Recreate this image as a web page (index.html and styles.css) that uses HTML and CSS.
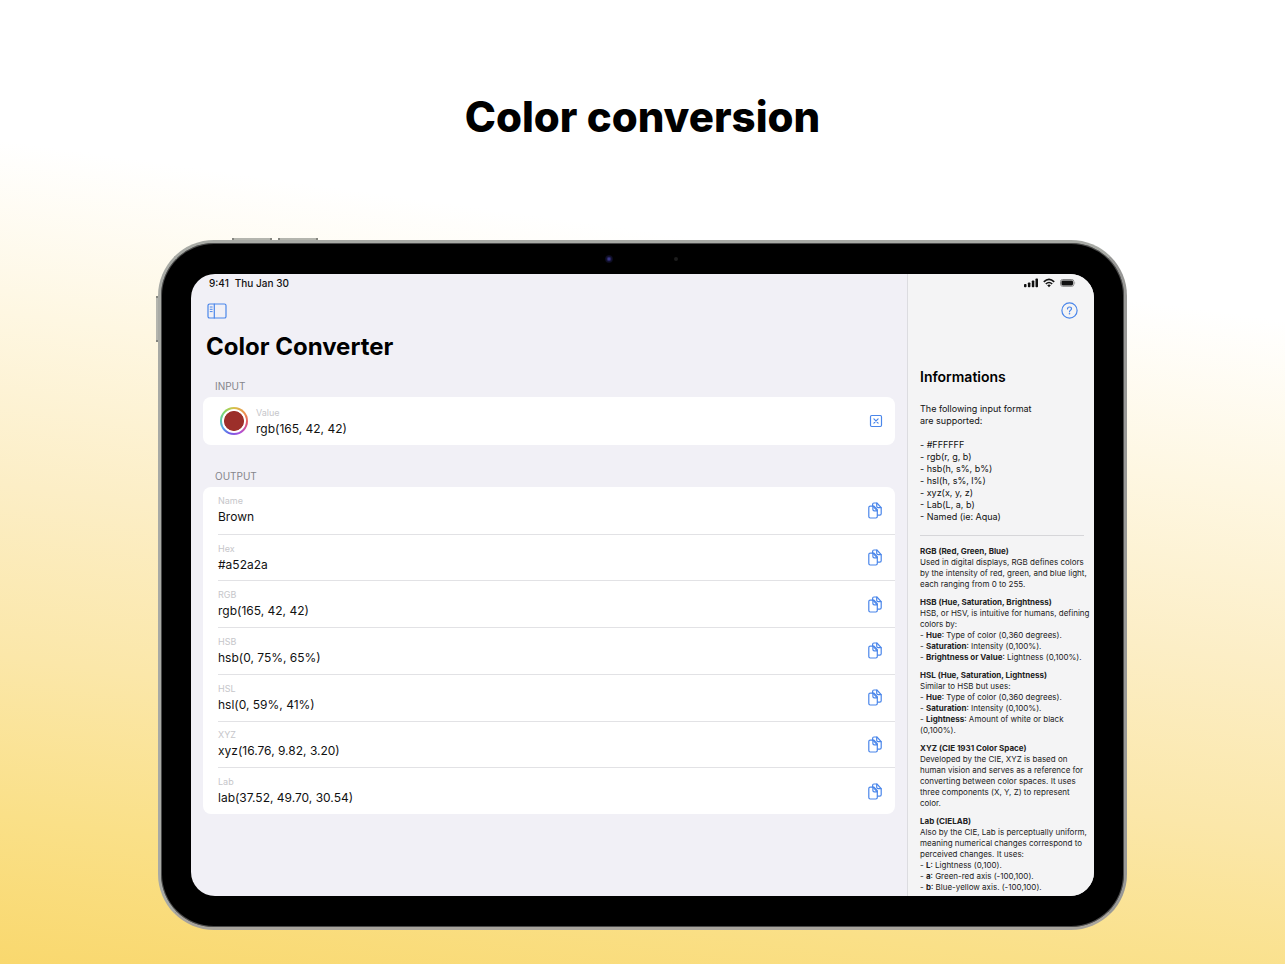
FILE: index.html
```html
<!DOCTYPE html>
<html lang="en">
<head>
<meta charset="utf-8">
<title>Color conversion</title>
<link rel="stylesheet" href="styles.css">
</head>
<body>
<svg class="defs" aria-hidden="true">
  <symbol id="copy" viewBox="0 0 14 17">
    <path d="M4.6 3.8V2.4Q4.6 1 6 1H8.9L13.2 5.6V11.8Q13.2 13.2 11.8 13.2H9.6"/>
    <path d="M8.7 1.2V4.2Q8.7 5.6 10.1 5.6H13"/>
    <path d="M2.2 4.1H4.9L9.3 8.9V14.6Q9.3 16 7.9 16H2.2Q.8 16 .8 14.6V5.5Q.8 4.1 2.2 4.1Z"/>
    <path d="M4.9 4.3V7.5Q4.9 8.9 6.3 8.9H9.1M5 4.1H6L9.3 7.6V9"/>
  </symbol>
</svg>
<main class="page">
  <h1 class="headline">Color conversion</h1>
  <div class="device">
    <span class="key key-a"></span><span class="key key-b"></span><span class="key key-c"></span>
    <span class="camera"></span><span class="sensor"></span>
    <div class="screen">
      <section class="content">
        <div class="status"><span>9:41</span><span>Thu Jan 30</span></div>
        <div class="toolbar">
          <button class="icon-button" type="button" aria-label="Toggle sidebar">
            <svg width="20" height="16" viewBox="0 0 20 16"><rect x="1" y="1" width="18" height="14" rx="1.6"/><path d="M7.3 1V15"/><path class="thin" d="M3.2 4H5.2M3.2 6.3H5.2M3.2 8.6H5.2"/></svg>
          </button>
        </div>
        <h2 class="title">Color Converter</h2>
        <h3 class="section-label">INPUT</h3>
        <div class="card input-card">
          <span class="ring"><input class="swatch" type="color" value="#9c2f2a" aria-label="Pick a color"></span>
          <div class="field">
            <label class="caption" for="value">Value</label>
            <input class="value" id="value" type="text" value="rgb(165, 42, 42)">
          </div>
          <button class="icon-button" type="button" aria-label="Clear">
            <svg width="14" height="14" viewBox="0 0 14 14"><rect x="1.5" y="1.5" width="11" height="11" rx="1.2"/><path d="M4.9 4.9L9.1 9.1M9.1 4.9L4.9 9.1"/></svg>
          </button>
        </div>
        <h3 class="section-label">OUTPUT</h3>
        <dl class="card output-card">
          <div class="row"><dt class="caption">Name</dt><dd class="value">Brown</dd><dd class="action"><button class="icon-button" type="button" aria-label="Copy name"><svg width="14" height="17"><use href="#copy"/></svg></button></dd></div>
          <div class="row"><dt class="caption">Hex</dt><dd class="value">#a52a2a</dd><dd class="action"><button class="icon-button" type="button" aria-label="Copy hex"><svg width="14" height="17"><use href="#copy"/></svg></button></dd></div>
          <div class="row"><dt class="caption">RGB</dt><dd class="value">rgb(165, 42, 42)</dd><dd class="action"><button class="icon-button" type="button" aria-label="Copy RGB"><svg width="14" height="17"><use href="#copy"/></svg></button></dd></div>
          <div class="row"><dt class="caption">HSB</dt><dd class="value">hsb(0, 75%, 65%)</dd><dd class="action"><button class="icon-button" type="button" aria-label="Copy HSB"><svg width="14" height="17"><use href="#copy"/></svg></button></dd></div>
          <div class="row"><dt class="caption">HSL</dt><dd class="value">hsl(0, 59%, 41%)</dd><dd class="action"><button class="icon-button" type="button" aria-label="Copy HSL"><svg width="14" height="17"><use href="#copy"/></svg></button></dd></div>
          <div class="row"><dt class="caption">XYZ</dt><dd class="value">xyz(16.76, 9.82, 3.20)</dd><dd class="action"><button class="icon-button" type="button" aria-label="Copy XYZ"><svg width="14" height="17"><use href="#copy"/></svg></button></dd></div>
          <div class="row"><dt class="caption">Lab</dt><dd class="value">lab(37.52, 49.70, 30.54)</dd><dd class="action"><button class="icon-button" type="button" aria-label="Copy Lab"><svg width="14" height="17"><use href="#copy"/></svg></button></dd></div>
        </dl>
      </section>
      <aside class="info">
        <div class="status status-end">
          <svg width="14" height="10" viewBox="0 0 14 10"><rect x="0" y="6" width="2.5" height="3.2" rx=".8"/><rect x="3.9" y="4.5" width="2.5" height="4.7" rx=".8"/><rect x="7.8" y="2.5" width="2.5" height="6.7" rx=".8"/><rect x="11.5" y=".5" width="2.5" height="8.7" rx=".8"/></svg>
          <svg width="12" height="10" viewBox="0 0 12 10"><path class="arc" d="M.8 3.8Q6-1.2 11.2 3.8M2.8 6Q6 3 9.2 6"/><path d="M4.2 7.2Q6 5.8 7.8 7.2L6 9.2Z"/></svg>
          <svg width="16" height="8" viewBox="0 0 16 8"><rect class="shell" x=".5" y=".5" width="13.4" height="6.8" rx="2.1"/><rect x="1.4" y="1.4" width="11.6" height="5" rx="1.3"/><path class="nub" d="M14.6 2.7Q16 3.9 14.6 5.1Z"/></svg>
        </div>
        <div class="toolbar toolbar-end">
          <button class="icon-button" type="button" aria-label="Help">
            <svg width="17" height="17" viewBox="0 0 17 17"><circle cx="8.5" cy="8.5" r="7.6"/><path d="M6.5 6.9Q6.5 5 8.5 5T10.5 6.7Q10.5 7.6 9.5 8.2T8.5 9.8"/><circle class="dot" cx="8.5" cy="11.8" r=".8"/></svg>
          </button>
        </div>
        <h2 class="info-title">Informations</h2>
        <p class="formats">The following input format<br>are supported:</p>
        <p class="formats">- #FFFFFF<br>- rgb(r, g, b)<br>- hsb(h, s%, b%)<br>- hsl(h, s%, l%)<br>- xyz(x, y, z)<br>- Lab(L, a, b)<br>- Named (ie: Aqua)</p>
        <hr class="rule">
        <div class="notes">
          <p><b>RGB (Red, Green, Blue)</b><br>Used in digital displays, RGB defines colors<br>by the intensity of red, green, and blue light,<br>each ranging from 0 to 255.</p>
          <p><b>HSB (Hue, Saturation, Brightness)</b><br>HSB, or HSV, is intuitive for humans, defining<br>colors by:<br>- <b>Hue</b>: Type of color (0,360 degrees).<br>- <b>Saturation</b>: Intensity (0,100%).<br>- <b>Brightness or Value</b>: Lightness (0,100%).</p>
          <p><b>HSL (Hue, Saturation, Lightness)</b><br>Similar to HSB but uses:<br>- <b>Hue</b>: Type of color (0,360 degrees).<br>- <b>Saturation</b>: Intensity (0,100%).<br>- <b>Lightness</b>: Amount of white or black<br>(0,100%).</p>
          <p><b>XYZ (CIE 1931 Color Space)</b><br>Developed by the CIE, XYZ is based on<br>human vision and serves as a reference for<br>converting between color spaces. It uses<br>three components (X, Y, Z) to represent<br>color.</p>
          <p><b>Lab (CIELAB)</b><br>Also by the CIE, Lab is perceptually uniform,<br>meaning numerical changes correspond to<br>perceived changes. It uses:<br>- <b>L</b>: Lightness (0,100).<br>- <b>a</b>: Green-red axis (-100,100).<br>- <b>b</b>: Blue-yellow axis. (-100,100).</p>
        </div>
      </aside>
    </div>
  </div>
</main>
</body>
</html>
```
FILE: styles.css
```css
* { box-sizing: border-box; }

body {
  margin: 0;
  font-family: Inter, "Liberation Sans", sans-serif;
  color: #111;
}

h1, h2, h3, p, dl, dd { margin: 0; }

.defs { position: absolute; width: 0; height: 0; }

.page {
  min-height: 100vh;
  padding: 88px 158px 34px;
  background: linear-gradient(188deg, #fff 28%, #fef7e2 43%, #fceec6 58%, #fbe7a9 73%, #fae088 87%, #f9d86e 100%);
}

.headline {
  margin-bottom: 94px;
  font-size: 42px;
  font-weight: 800;
  line-height: 58px;
  text-align: center;
  color: #000;
}

.device {
  position: relative;
  padding: 31px 30px;
  border: 3px solid;
  border-color: #a8aaa5 #989896 #a8a49d #a8aaa5;
  border-radius: 56px;
  background: #000;
  box-shadow: inset 0 0 0 1px #4a4a4a;
}

.key { position: absolute; background: #b4b5ae; border: 0 solid #84857f; }
.key-a, .key-b { top: -5px; height: 2px; width: 40px; border-width: 0 2px; }
.key-a { left: 71px; }
.key-b { left: 117px; }
.key-c { top: 53px; left: -5px; width: 2px; height: 46px; border-width: 2px 0; }

.camera, .sensor { position: absolute; border-radius: 50%; }
.camera { top: 12px; left: 444px; width: 8px; height: 8px; background: radial-gradient(#3a3788 15%, #121130 45%, #05050c 80%); }
.sensor { top: 14px; left: 513px; width: 4px; height: 4px; background: #1c1c1c; }

.screen {
  display: grid;
  grid-template-columns: minmax(0, 1fr) 187px;
  min-height: 622px;
  border-radius: 24px;
  background: #f1f0f6;
  overflow: hidden;
}

.content { padding: 0 12px; }

.info {
  padding: 0 10px 0 12px;
  border-left: 1px solid #dcdce0;
  background: #f4f4f5;
}

.status {
  display: flex;
  align-items: center;
  gap: 6px;
  height: 18px;
  padding: 0 6px;
  font-size: 10px;
  font-weight: 500;
}
.status-end { justify-content: flex-end; gap: 5px; padding: 0 8px; fill: #111; }
.arc { fill: none; stroke: #111; stroke-width: 1.6; }
.shell { fill: none; stroke: #888; }
.nub { fill: #888; }

.toolbar {
  display: flex;
  align-items: center;
  height: 37px;
  padding: 0 4px;
}
.toolbar-end { justify-content: flex-end; padding: 0 6px; }

.icon-button {
  display: flex;
  padding: 0;
  border: 0;
  background: none;
  fill: none;
  stroke: #4a86ea;
  stroke-width: 1.2;
  stroke-linecap: round;
  stroke-linejoin: round;
  cursor: pointer;
}
.thin { stroke-width: 1; }
.dot { fill: #4a86ea; stroke: none; }

.title {
  padding-left: 3px;
  font-size: 24px;
  font-weight: 700;
  line-height: 36px;
  color: #000;
}

.section-label {
  margin: 13px 0 3px;
  padding-left: 12px;
  font-size: 10px;
  font-weight: 400;
  line-height: 16px;
  color: #85858b;
}

.card { border-radius: 8px; background: #fff; }

.input-card {
  display: flex;
  align-items: center;
  gap: 8px;
  min-height: 48px;
  margin-bottom: 23px;
  padding: 0 12px 0 17px;
}

.ring {
  display: flex;
  padding: 2px;
  border-radius: 50%;
  background: conic-gradient(#d8c04a, #ee8a50 60deg, #e0566a 100deg, #b04fd8 150deg, #6b5be8 200deg, #55a8e8 240deg, #5fd0a0 280deg, #8cd860 320deg, #d8c04a);
}
.swatch {
  width: 24px;
  height: 24px;
  padding: 0;
  border: 2px solid #fff;
  border-radius: 50%;
  background: #9c2f2a;
  appearance: none;
}
.swatch::-webkit-color-swatch-wrapper { padding: 0; }
.swatch::-webkit-color-swatch { border: 0; border-radius: 50%; }

.field { display: flex; flex: 1; flex-direction: column; padding-top: 2px; }

.caption { font-size: 9px; line-height: 14px; color: #c6c6ca; }

.value {
  padding: 0;
  border: 0;
  background: none;
  font-family: inherit;
  font-size: 12px;
  line-height: 18px;
  color: #111;
}

.output-card {
  display: grid;
  grid-auto-rows: 1fr;
  min-height: 327px;
  padding-left: 15px;
}

.row {
  display: grid;
  grid-template-columns: 1fr auto;
  align-content: center;
  padding-right: 13px;
}
.row + .row { border-top: 1px solid #e2e2e5; }
.action { grid-column: 2; grid-row: 1 / 3; align-self: center; }

.info-title {
  margin: 36px 0 14px;
  font-size: 14px;
  font-weight: 600;
  line-height: 24px;
  color: #000;
}

.formats {
  margin-bottom: 12px;
  font-size: 9px;
  line-height: 12px;
  white-space: nowrap;
}

.rule { margin: 10px 0; border: 0; border-top: 1px solid #d6d6d9; }

.notes {
  display: grid;
  gap: 7px;
  font-size: 8px;
  line-height: 11px;
  white-space: nowrap;
  color: #222;
}
```
